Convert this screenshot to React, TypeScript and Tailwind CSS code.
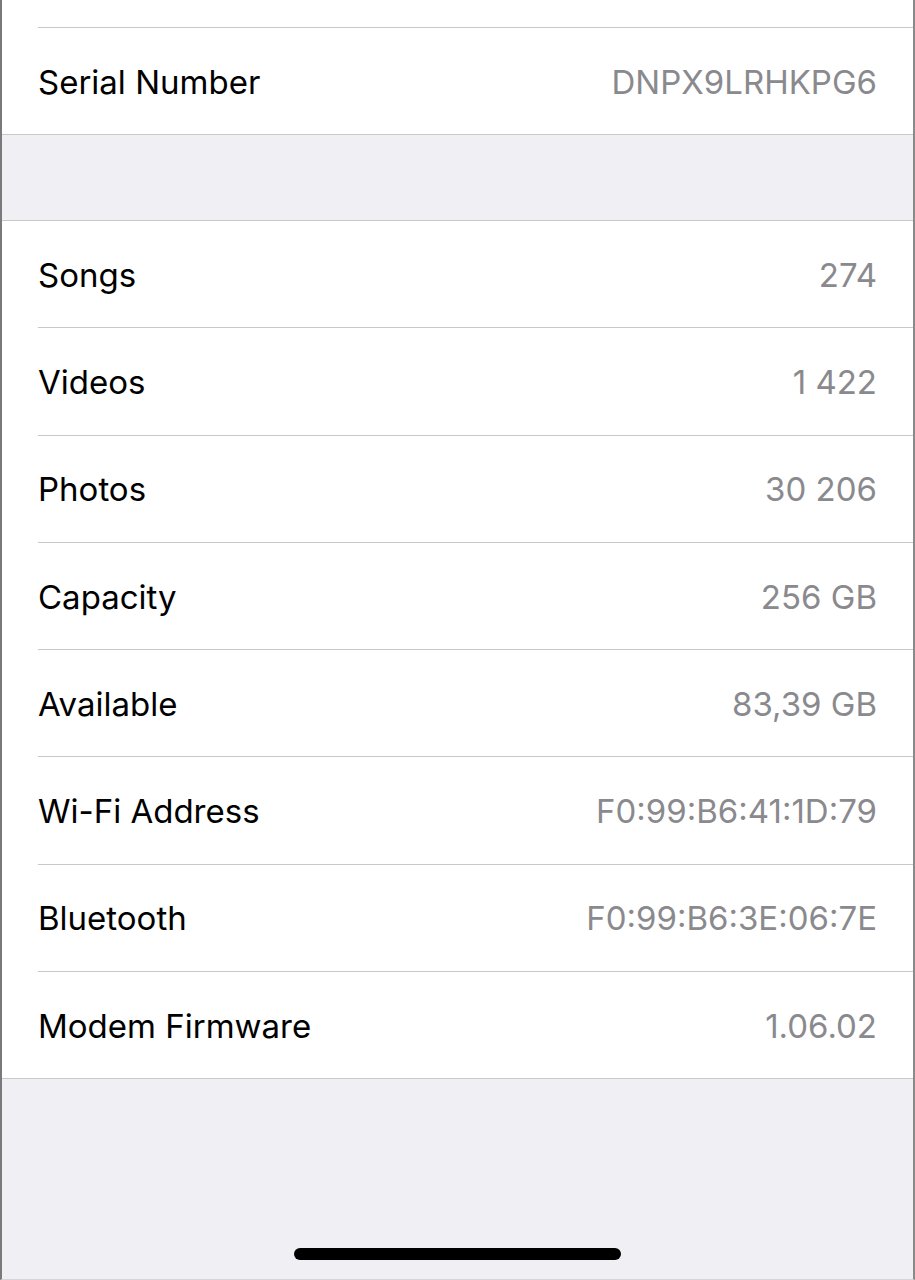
const rows: [string, string][] = [
  ['Songs', '274'],
  ['Videos', '1 422'],
  ['Photos', '30 206'],
  ['Capacity', '256 GB'],
  ['Available', '83,39 GB'],
  ['Wi-Fi Address', 'F0:99:B6:41:1D:79'],
  ['Bluetooth', 'F0:99:B6:3E:06:7E'],
  ['Modem Firmware', '1.06.02'],
]

function Row({ label, value, last = false }: { label: string; value: string; last?: boolean }) {
  return (
    <div className="pl-[36px] bg-white">
      <div
        className={`flex items-center justify-between pr-[36px] pt-[2px] ${
          last ? 'h-[106.3px]' : 'h-[107.3px] border-b border-[#c8c7cc]'
        }`}
      >
        <span className="text-black">{label}</span>
        <span className="text-[#8a8a8e]">{value}</span>
      </div>
    </div>
  )
}

export default function App() {
  return (
    <div
      className="w-[915px] h-[1280px] bg-[#efeff4] border-l-2 border-r-2 border-b border-l-[#7a7a7a] border-r-[#8a8a8a] border-b-[#d6d6da] flex flex-col text-[33px] leading-none overflow-hidden"
      style={{ fontFamily: 'Inter, "Noto Sans", sans-serif' }}
    >
      {/* tail of the previous section */}
      <div className="bg-white h-[28px] pl-[36px]">
        <div className="h-full border-b border-[#c8c7cc]" />
      </div>
      <div className="bg-white pl-[36px] border-b border-[#c8c7cc]">
        <div className="flex items-center justify-between h-[106px] pr-[36px] pt-[2px]">
          <span className="text-black">Serial Number</span>
          <span className="text-[#8a8a8e]">DNPX9LRHKPG6</span>
        </div>
      </div>

      <div className="h-[85px]" />

      <div className="border-t border-b border-[#c8c7cc]">
        {rows.map(([label, value], i) => (
          <Row key={label} label={label} value={value} last={i === rows.length - 1} />
        ))}
      </div>

      <div className="flex-1 flex items-end justify-center pb-[19px]">
        <div className="w-[327px] h-[12px] rounded-full bg-black" />
      </div>
    </div>
  )
}
